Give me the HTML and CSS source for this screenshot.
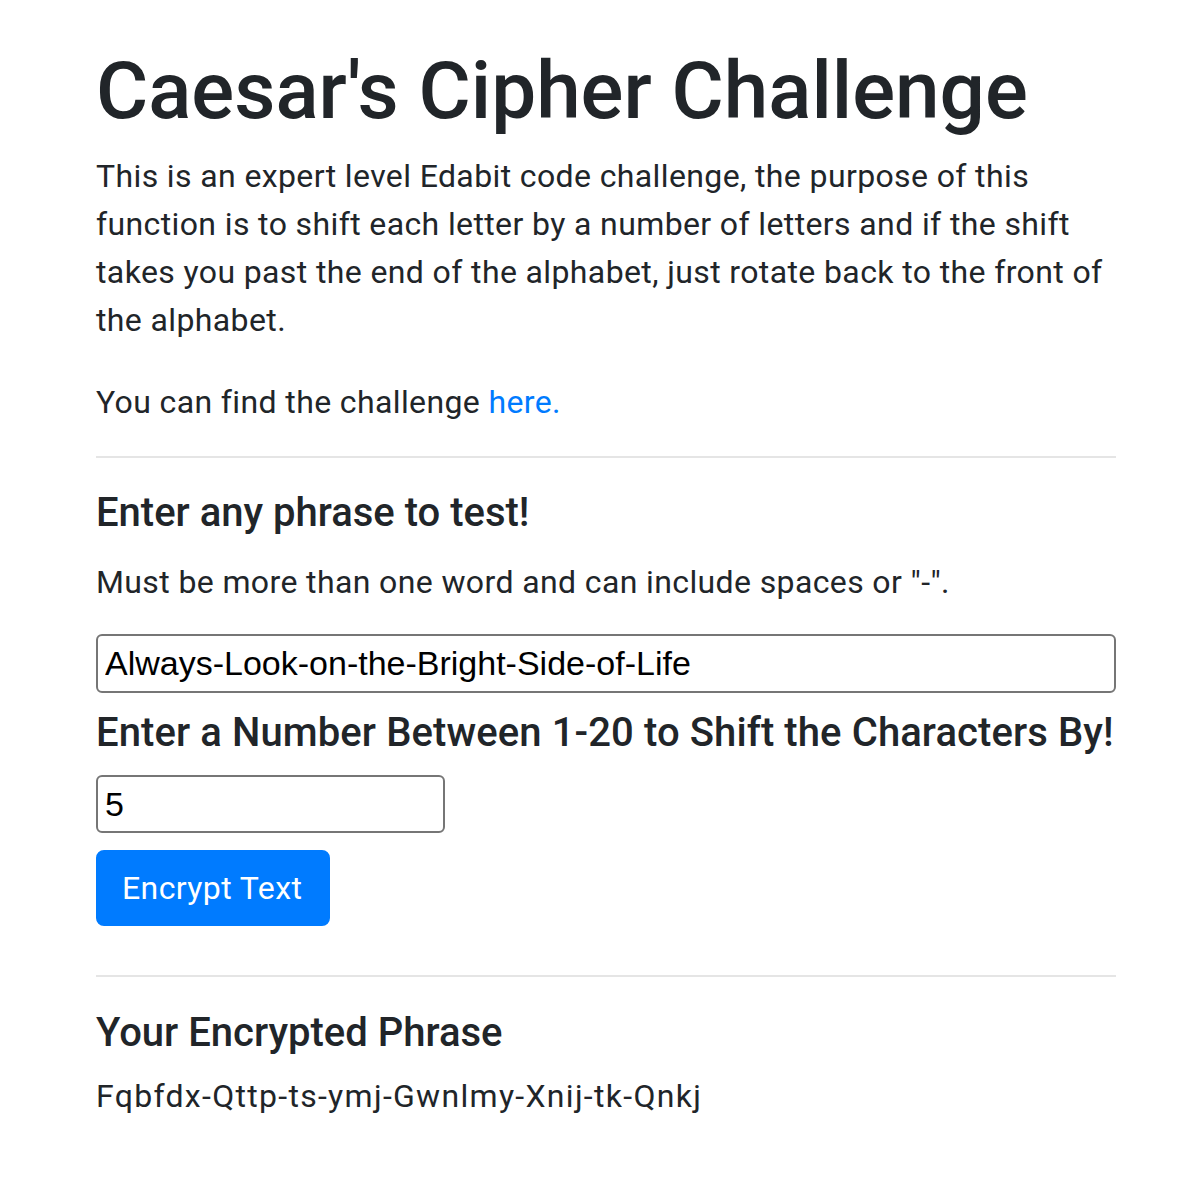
FILE: index.html
```html
<!DOCTYPE html>
<html lang="en">
<head>
<meta charset="utf-8">
<title>Caesar's Cipher Challenge</title>
<link rel="stylesheet" href="styles.css">
</head>
<body>
<main class="container">
  <h1 class="title">Caesar's Cipher Challenge</h1>
  <p class="intro">This is an expert level Edabit code challenge, the purpose of this function is to shift each letter by a number of letters and if the shift takes you past the end of the alphabet, just rotate back to the front of the alphabet.</p>
  <p class="source">You can find the challenge <a href="#" class="link">here.</a></p>
  <hr class="rule rule-top">
  <h2 class="section-title">Enter any phrase to test!</h2>
  <p class="hint">Must be more than one word and can include spaces or "-".</p>
  <input class="field field-text" type="text" value="Always-Look-on-the-Bright-Side-of-Life">
  <h2 class="section-title shift-title">Enter a Number Between 1-20 to Shift the Characters By!</h2>
  <input class="field field-num" type="text" value="5">
  <button class="btn-primary" type="button">Encrypt Text</button>
  <hr class="rule rule-bottom">
  <h3 class="section-title result-title">Your Encrypted Phrase</h3>
  <p class="result">Fqbfdx-Qttp-ts-ymj-Gwnlmy-Xnij-tk-Qnkj</p>
</main>
</body>
</html>
```
FILE: styles.css
```css
html, body {
  margin: 0;
  padding: 0;
  background: #fff;
}
body {
  font-family: Roboto, "Noto Sans", sans-serif;
  color: #212529;
  font-size: 32px;
  line-height: 48px;
}
.container {
  width: 1020px;
  margin: 0 0 0 96px;
  padding-top: 43px;
  display: flex;
  flex-direction: column;
  align-items: flex-start;
}
.title {
  font-size: 80px;
  line-height: 96px;
  font-weight: 500;
  margin: 0 0 13px;
}
.intro,
.source,
.hint {
  letter-spacing: 0.38px;
}
.intro {
  margin: 0;
}
.source {
  margin: 34px 0 0;
}
.link {
  color: #007bff;
  text-decoration: none;
}
.rule {
  align-self: stretch;
  border: 0;
  border-top: 2px solid #e5e5e5;
  height: 0;
}
.rule-top {
  margin: 30px 0 0;
}
.section-title {
  font-size: 40px;
  line-height: 48px;
  font-weight: 500;
  margin: 31px 0 0;
}
.hint {
  margin: 21px 0 0;
}
.field {
  box-sizing: border-box;
  height: 59px;
  border: 2px solid #767676;
  border-radius: 6px;
  font-family: "Liberation Sans", Arial, sans-serif;
  font-size: 34px;
  color: #000;
  padding: 0 7px;
  background: #fff;
}
.field-text {
  align-self: stretch;
  width: 100%;
  margin-top: 28px;
}
.shift-title {
  margin-top: 16px;
  letter-spacing: 0.1px;
}
.field-num {
  width: 349px;
  height: 58px;
  margin-top: 18px;
}
.btn-primary {
  margin-top: 17px;
  height: 76px;
  padding: 0 26px 0 24px;
  border: 2px solid #007bff;
  background: #007bff;
  color: #fff;
  border-radius: 8px;
  font-family: Roboto, "Noto Sans", sans-serif;
  font-size: 32px;
  font-weight: 400;
  letter-spacing: 0.4px;
}
.rule-bottom {
  margin: 49px 0 0;
}
.result-title {
  margin-top: 32px;
}
.result {
  margin: 15px 0 0;
  letter-spacing: 1.3px;
}
```
